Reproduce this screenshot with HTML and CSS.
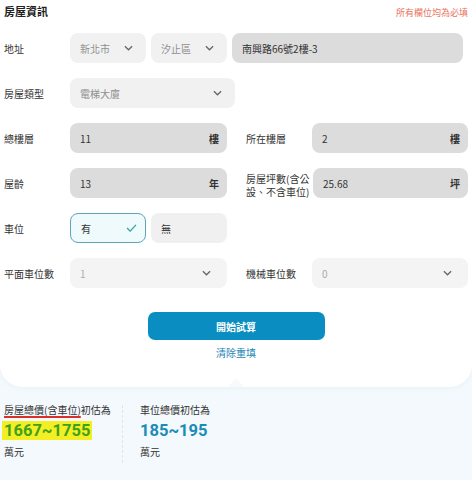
FILE: index.html
```html
<!DOCTYPE html>
<html lang="zh-Hant">
<head>
<meta charset="utf-8">
<link rel="stylesheet" href="styles.css">
</head>
<body>
<div class="card">
  <div class="head">
    <h2 class="title">房屋資訊</h2>
    <span class="req">所有欄位均為必填</span>
  </div>

  <div class="row addr">
    <span class="lbl">地址</span>
    <div class="field sel w76"><span>新北市</span><svg class="chev" viewBox="0 0 10 6"><path d="M1 1l4 4 4-4"/></svg></div>
    <div class="field sel w76"><span>汐止區</span><svg class="chev" viewBox="0 0 10 6"><path d="M1 1l4 4 4-4"/></svg></div>
    <div class="field inp w231"><span class="val">南興路66號2樓-3</span></div>
  </div>

  <div class="row addr">
    <span class="lbl">房屋類型</span>
    <div class="field sel w165"><span>電梯大廈</span><svg class="chev" viewBox="0 0 10 6"><path d="M1 1l4 4 4-4"/></svg></div>
  </div>

  <div class="row grid">
    <div class="col"><span class="lbl">總樓層</span><div class="field inp"><span class="val">11</span><b class="unit">樓</b></div></div>
    <div class="col"><span class="lbl">所在樓層</span><div class="field inp"><span class="val">2</span><b class="unit">樓</b></div></div>
  </div>

  <div class="row grid">
    <div class="col"><span class="lbl">屋齡</span><div class="field inp"><span class="val">13</span><b class="unit">年</b></div></div>
    <div class="col"><span class="lbl two">房屋坪數(含公設、不含車位)</span><div class="field inp"><span class="val">25.68</span><b class="unit">坪</b></div></div>
  </div>

  <div class="row addr">
    <span class="lbl">車位</span>
    <div class="field opt on w76"><span class="val">有</span><svg class="check" viewBox="0 0 12 9"><path d="M1 4.5l3.5 3.5L11 1"/></svg></div>
    <div class="field opt w76"><span class="val">無</span></div>
  </div>

  <div class="row grid">
    <div class="col"><span class="lbl">平面車位數</span><div class="field sel light"><span>1</span><svg class="chev" viewBox="0 0 10 6"><path d="M1 1l4 4 4-4"/></svg></div></div>
    <div class="col"><span class="lbl">機械車位數</span><div class="field sel light"><span>0</span><svg class="chev" viewBox="0 0 10 6"><path d="M1 1l4 4 4-4"/></svg></div></div>
  </div>

  <div class="actions">
    <button class="btn">開始試算</button>
    <a class="reset">清除重填</a>
  </div>
  <span class="notch"></span>
</div>

<div class="result">
  <div class="res-col first">
    <p class="res-lbl"><span class="ul">房屋總價(含車位)</span>初估為</p>
    <p class="res-num green"><mark>1667~1755</mark></p>
    <p class="res-unit">萬元</p>
  </div>
  <div class="divider"></div>
  <div class="res-col">
    <p class="res-lbl">車位總價初估為</p>
    <p class="res-num blue">185~195</p>
    <p class="res-unit">萬元</p>
  </div>
</div>
</body>
</html>
```

FILE: styles.css
```css
* { box-sizing: border-box; }
html, body { margin: 0; padding: 0; }
body {
  width: 472px;
  height: 480px;
  overflow: hidden;
  background: #f3f9fc;
  font-family: "Noto Sans CJK TC", "Noto Sans", sans-serif;
  color: #333;
  font-size: 10px;
}
.card {
  position: relative;
  background: #fff;
  padding: 0 4px 0 4px;
  height: 387px;
  border-radius: 0 0 22px 22px;
  box-shadow: 0 1px 4px rgba(190, 215, 228, 0.18);
}
.head {
  display: flex;
  justify-content: space-between;
  align-items: center;
  height: 22px;
  margin-bottom: 11px;
}
.title {
  margin: 0;
  font-size: 11px;
  font-weight: 700;
  color: #222;
}
.req {
  font-size: 9px;
  color: #e8735c;
  margin-top: 2px;
}
.row {
  height: 30px;
  margin-bottom: 15px;
}
.row.addr {
  display: flex;
  align-items: center;
  gap: 5px;
}
.row.addr .lbl { margin-right: -5px; }
.row.grid {
  display: grid;
  grid-template-columns: 223px 222px;
  column-gap: 19px;
}
.col {
  display: flex;
  align-items: center;
}
.lbl {
  width: 66px;
  flex: none;
  font-size: 10px;
  color: #333;
  line-height: 13px;
}
.lbl.two { width: 67px; padding-right: 2px; margin-top: 4px; }
.field {
  height: 30px;
  border-radius: 8px;
  display: flex;
  align-items: center;
  justify-content: space-between;
  padding: 0 10px;
  font-size: 10px;
  flex: 1;
}
.w76 { flex: none; width: 76px; }
.w165 { flex: none; width: 165px; }
.w231 { flex: none; width: 231px; }
.sel {
  background: #f1f1f1;
  color: #8f8f8f;
  padding-right: 13px;
}
.sel.light {
  background: #f4f4f4;
  color: #aaa;
  padding-right: 16px;
}
.inp {
  background: #dcdcdc;
  color: #333;
  padding-right: 8px;
}
.val { color: #333; }
.unit { font-weight: 700; color: #333; font-size: 10px; }
.chev {
  width: 9px;
  height: 6px;
  fill: none;
  stroke: #666;
  stroke-width: 1.4;
}
.opt {
  background: #f0f0f0;
}
.opt.on {
  background: #effafc;
  border: 1px solid #5fa5b6;
  padding-right: 8px;
}
.check {
  width: 11px;
  height: 8px;
  fill: none;
  stroke: #3aa0a8;
  stroke-width: 1.5;
}
.actions {
  display: flex;
  flex-direction: column;
  align-items: center;
  padding-top: 9px;
}
.btn {
  width: 177px;
  height: 28px;
  border: 0;
  border-radius: 7px;
  background: #0a8ec1;
  color: #fff;
  font-family: inherit;
  font-weight: 700;
  font-size: 10px;
}
.reset {
  margin-top: 6px;
  color: #1f87b6;
  font-size: 10px;
  line-height: 14px;
}
.notch {
  position: absolute;
  left: 228px;
  bottom: 0;
  width: 0;
  height: 0;
  border-left: 8px solid transparent;
  border-right: 8px solid transparent;
  border-bottom: 9px solid #f6fafd;
}
.result {
  display: flex;
  padding: 16px 0 0 4px;
}
.res-col { width: 118px; }
.divider {
  width: 0;
  height: 58px;
  border-left: 1px dashed #dde6ea;
  margin: 2px 17px 0 0;
}
.res-lbl {
  margin: 0;
  font-size: 10px;
  line-height: 14px;
  color: #333;
}
.ul {
  text-decoration: underline;
  text-decoration-color: #d9302a;
  text-decoration-thickness: 2px;
  text-underline-offset: 2px;
}
.res-num {
  margin: 3px 0 0 0;
  font-family: "Roboto", "Noto Sans", sans-serif;
  font-weight: 700;
  font-size: 16.5px;
  line-height: 21px;
}
.res-num.green { margin-left: -2px; }
.green mark {
  background: #f4ef24;
  color: #3ea11f;
  padding: 0 2px;
}
.blue { color: #1b8cb6; }
.res-unit {
  margin: 4px 0 0 0;
  font-size: 10px;
  line-height: 14px;
  color: #333;
}
```
